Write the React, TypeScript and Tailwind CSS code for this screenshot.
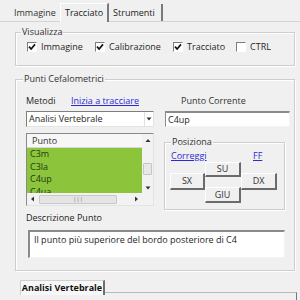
import React from "react";

function Check({ checked }: { checked: boolean }) {
  return (
    <span className="w-[10px] h-[10px] shrink-0 bg-white border-t border-l border-[#7c7c7c] border-r border-b border-r-[#ffffff] border-b-[#ffffff] flex items-center justify-center">
      {checked && (
        <svg width="8" height="8" viewBox="0 0 8 8">
          <path d="M1 3.6 L3.1 6 L7 1.4" fill="none" stroke="#111" strokeWidth="1.7" />
        </svg>
      )}
    </span>
  );
}

function Tri({ dir }: { dir: "up" | "down" | "left" | "right" }) {
  const d =
    dir === "up"
      ? "M0.5 4 L3 1 L5.5 4 Z"
      : dir === "down"
      ? "M0.5 1.5 L5.5 1.5 L3 4.5 Z"
      : dir === "left"
      ? "M4 0.5 L4 5.5 L1 3 Z"
      : "M2 0.5 L2 5.5 L5 3 Z";
  return (
    <svg width="6" height="6" viewBox="0 0 6 6">
      <path d={d} fill="#333" />
    </svg>
  );
}

function Btn({ label, className }: { label: string; className: string }) {
  return (
    <div
      className={
        "flex items-center justify-center bg-[#f0f0f0] border-t border-l border-[#ffffff] border-r-2 border-b-2 border-r-[#6b6b6b] border-b-[#6b6b6b] text-[9px] text-[#333] " +
        className
      }
    >
      {label}
    </div>
  );
}

function GroupLabel({ text, ml }: { text: string; ml: string }) {
  return (
    <div className={"-mt-[7px] h-[12px] leading-[12px] px-[1px] w-fit bg-[#f0f0f0] text-[#333] " + ml}>
      {text}
    </div>
  );
}

export default function App() {
  return (
    <div className="w-[300px] h-[300px] bg-[#f0f0f0] overflow-hidden font-['Open_Sans',sans-serif] text-[9px] text-[#262626] leading-[12px]">
      {/* Tab strip */}
      <div className="h-[22px] flex items-end pl-[10px] border-b border-[#d4d4d4]">
        <div className="h-[17px] px-[4px] flex items-center text-[#333]">Immagine</div>
        <div className="h-[19px] px-[4px] flex items-center bg-[#f0f0f0] border-t border-l border-[#ffffff] border-r-2 border-r-[#7a7a7a] -mb-px text-[#222]">
          Tracciato
        </div>
        <div className="h-[17px] pl-[4px] pr-[6px] flex items-center border-r-2 border-[#7a7a7a] text-[#222]">
          Strumenti
        </div>
      </div>

      <div className="pl-[15px] pr-[5px]">
        {/* Visualizza */}
        <div className="mt-[10px] h-[34px] border border-[#cdcdcd] shadow-[inset_1px_1px_0_#ffffff,1px_1px_0_#ffffff]">
          <GroupLabel text="Visualizza" ml="ml-[5px]" />
          <div className="mt-[3px] h-[12px] flex items-center pl-[11px]">
            <div className="w-[68px] flex items-center gap-[4px]">
              <Check checked />
              <span>Immagine</span>
            </div>
            <div className="w-[78px] flex items-center gap-[4px]">
              <Check checked />
              <span>Calibrazione</span>
            </div>
            <div className="w-[63px] flex items-center gap-[4px]">
              <Check checked />
              <span>Tracciato</span>
            </div>
            <div className="flex items-center gap-[4px]">
              <Check checked={false} />
              <span>CTRL</span>
            </div>
          </div>
        </div>

        {/* Punti Cefalometrici */}
        <div className="mt-[13px] h-[192px] border border-[#cdcdcd] shadow-[inset_1px_1px_0_#ffffff,1px_1px_0_#ffffff]">
          <GroupLabel text="Punti Cefalometrici" ml="ml-[7px]" />
          <div className="flex pl-[10px] gap-[11px]">
            {/* left column */}
            <div className="w-[128px] flex flex-col">
              <div className="mt-[10px] h-[12px] flex items-center">
                <span className="w-[45px]">Metodi</span>
                <span className="text-[#2b2bd6] underline">Inizia a tracciare</span>
              </div>
              <div className="mt-[4px] h-[16px] bg-white border-t border-l border-[#7e7e7e] border-b border-r border-b-[#e3e3e3] border-r-[#e3e3e3] flex items-center">
                <span className="pl-[2px] flex-1">Analisi Vertebrale</span>
                <span className="w-[9px] h-full flex items-center justify-center border-l border-[#e0e0e0]">
                  <Tri dir="down" />
                </span>
              </div>
              {/* list */}
              <div className="mt-[6px] h-[73px] bg-white border-t border-l border-[#8a8a8a] border-b border-r border-b-[#e3e3e3] border-r-[#e3e3e3] flex">
                <div className="w-[115px] flex flex-col">
                  <div className="h-[14px] flex items-center pl-[5px] bg-[#f7f7f7] border-b border-[#d8d8d8] text-[#333]">
                    Punto
                  </div>
                  <div className="h-[45px] bg-[#8cc43c] overflow-hidden pl-[3px] text-[#1f3a10] leading-[12.5px]">
                    <div>C3m</div>
                    <div>C3la</div>
                    <div>C4up</div>
                    <div>C4ua</div>
                  </div>
                  <div className="h-[12px] bg-[#f2f2f2] flex items-center px-[3px]">
                    <Tri dir="left" />
                    <div className="ml-[3px] w-[78px] h-[9px] bg-[#e4e4e4] border border-[#c8c8c8] rounded-[1px] flex items-center justify-center text-[6px] leading-[6px] text-[#777]">
                      |||
                    </div>
                    <div className="flex-1" />
                    <Tri dir="right" />
                  </div>
                </div>
                <div className="w-[11px] flex flex-col bg-[#f2f2f2]">
                  <div className="h-[14px] flex items-center justify-center">
                    <Tri dir="up" />
                  </div>
                  <div className="mt-[15px] mx-[1px] h-[12px] bg-[#e8e8e8] border border-[#c4c4c4] rounded-[1px]" />
                  <div className="mt-[9px] h-[8px] flex items-center justify-center">
                    <Tri dir="down" />
                  </div>
                </div>
              </div>
            </div>

            {/* right column */}
            <div className="w-[125px] flex flex-col">
              <div className="mt-[10px] h-[12px] flex items-center pl-[16px] text-[#333]">Punto Corrente</div>
              <div className="mt-[4px] h-[16px] bg-white border-t-2 border-l border-[#8a8a8a] border-b border-r border-b-[#f4f4f4] border-r-[#f4f4f4] flex items-center pl-[2px]">
                C4up
              </div>
              <div className="mt-[15px] -ml-[1px] w-[121px] h-[68px] border border-[#cdcdcd] shadow-[inset_1px_1px_0_#ffffff,1px_1px_0_#ffffff]">
                <GroupLabel text="Posiziona" ml="ml-[6px]" />
                <div className="mt-[2px] h-[12px] flex items-center pl-[6px]">
                  <span className="w-[82px] text-[#2b2bd6] underline">Correggi</span>
                  <span className="text-[#2b2bd6] underline">FF</span>
                </div>
                <div className="pl-[5px] grid grid-cols-[35px_36px_36px] grid-rows-[11px_4px_10px_3px_13px]">
                  <Btn label="SU" className="col-start-2 row-start-1 row-span-2" />
                  <Btn label="SX" className="col-start-1 row-start-2 row-span-3" />
                  <Btn label="DX" className="col-start-3 row-start-2 row-span-3" />
                  <Btn label="GIU" className="col-start-2 row-start-4 row-span-2" />
                </div>
              </div>
            </div>
          </div>

          <div className="mt-[2px] h-[12px] pl-[10px] flex items-center text-[#222]">Descrizione Punto</div>
          <div className="mt-[6px] ml-[12px] w-[257px] h-[28px] bg-white border-t-2 border-l-2 border-[#8a8a8a] border-b border-r border-b-[#f4f4f4] border-r-[#f4f4f4] pl-[4px] pt-[2px]">
            Il punto più superiore del bordo posteriore di C4
          </div>
        </div>

        {/* bottom tab */}
        <div className="mt-[9px] flex items-start">
          <div className="ml-[5px] w-[85px] h-[15px] flex items-center justify-center bg-[#f7f7f7] border-t border-l border-[#d0d0d0] border-r-2 border-r-[#6e6e6e] font-bold text-[#111]">
            Analisi Vertebrale
          </div>
          <div className="flex-1 -mr-[2px] mt-[12px] h-[10px] border-t border-r border-[#b8b8b8] border-r-[#777]" />
        </div>
      </div>
    </div>
  );
}
